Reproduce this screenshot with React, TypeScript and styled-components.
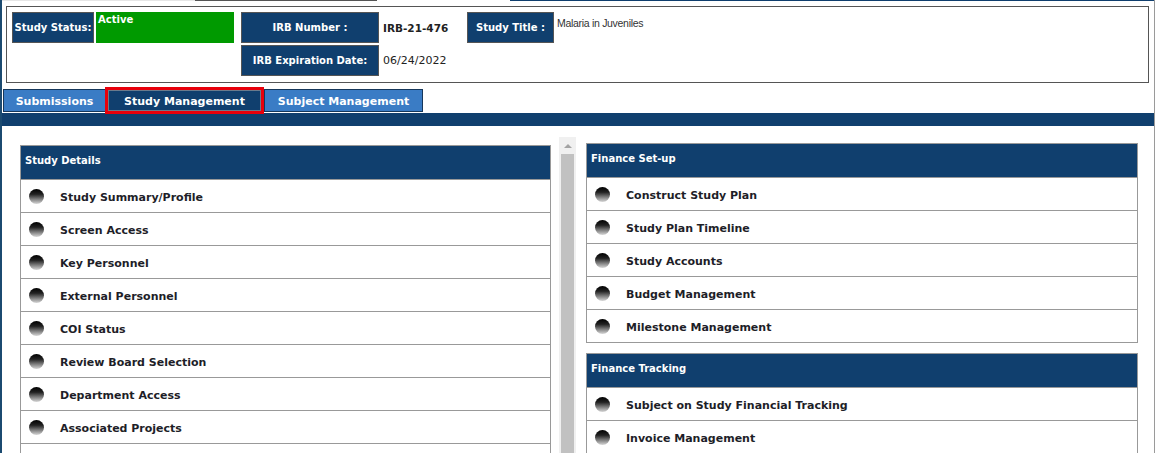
import React from 'react'
import styled, { createGlobalStyle } from 'styled-components'

const NAVY = '#103f6e'

const GlobalStyle = createGlobalStyle`
  html, body {
    margin: 0;
    padding: 0;
    overflow: hidden;
    background: #fff;
  }
  body {
    font-family: "DejaVu Sans", Verdana, sans-serif;
  }
`

const Page = styled.div`
  width: 1155px;
  height: 453px;
  box-sizing: border-box;
  border-left: 2px solid #1b4a70;
  border-right: 1px solid #9a9a9a;
  overflow: hidden;
`

const TopEdge = styled.div`
  display: flex;
  height: 1px;
`

const EdgePiece = styled.div<{ $w?: number; $c: string }>`
  flex: ${(p) => (p.$w ? `0 0 ${p.$w}px` : '1')};
  background: ${(p) => p.$c};
`

const InfoBox = styled.div`
  margin: 5px 5px 0 4px;
  border: 1px solid #555;
  padding: 5px 5px 6px;
  display: flex;
  align-items: flex-start;
`

const Label = styled.div<{ $w: number }>`
  box-sizing: border-box;
  width: ${(p) => p.$w}px;
  height: 31px;
  flex: none;
  background: ${NAVY};
  border: 1px solid #555;
  color: #fff;
  font-size: 10px;
  font-weight: bold;
  display: flex;
  align-items: center;
  justify-content: center;
  white-space: nowrap;
`

const StatusGroup = styled.div`
  display: flex;
  gap: 2px;
  margin-right: 7px;
`

const StatusValue = styled.div`
  width: 138px;
  height: 31px;
  background: #009a00;
  color: #fff;
  font-size: 10px;
  font-weight: bold;
  padding: 2px 2px 0;
  box-sizing: border-box;
`

const IrbGroup = styled.div`
  display: flex;
  flex-direction: column;
  gap: 2px;
`

const IrbRow = styled.div`
  display: flex;
  align-items: center;
`

const IrbValue = styled.div<{ $bold?: boolean }>`
  width: 84px;
  padding-left: 4px;
  font-size: ${(p) => (p.$bold ? 10.5 : 11)}px;
  font-weight: ${(p) => (p.$bold ? 'bold' : 'normal')};
  color: #222;
  white-space: nowrap;
`

const TitleValue = styled.div`
  padding: 5px 0 0 3px;
  font-family: "Liberation Sans", Arial, sans-serif;
  font-size: 10.5px;
  letter-spacing: -0.3px;
  color: #333;
`

const TabRow = styled.div`
  display: flex;
  margin: 6px 0 1px 1px;
  height: 23px;
`

const Tab = styled.div<{ $w: number; $active?: boolean }>`
  box-sizing: border-box;
  width: ${(p) => p.$w}px;
  margin-right: ${(p) => (p.$active ? 3 : 2)}px;
  height: ${(p) => (p.$active ? 21 : 23)}px;
  align-self: center;
  padding-top: 2px;
  background: ${(p) => (p.$active ? NAVY : '#3a7cc5')};
  border: 1px solid ${(p) => (p.$active ? '#6a7a8c' : '#16375a')};
  outline: ${(p) => (p.$active ? '3px solid #e8000b' : 'none')};
  color: #fff;
  font-size: 11px;
  font-weight: bold;
  display: flex;
  align-items: center;
  justify-content: center;
  white-space: nowrap;
`

const Bar = styled.div`
  height: 13px;
  background: ${NAVY};
`

const Content = styled.div`
  display: flex;
  align-items: flex-start;
  gap: 10px;
  padding: 11px 0 0 18px;
`

const LeftColumn = styled.div`
  display: flex;
  gap: 8px;
  align-items: flex-start;
`

const ListArea = styled.div`
  width: 531px;
  margin-top: 8px;
`

const Rail = styled.div`
  width: 17px;
  height: 420px;
  background: #f0f0f0;
  display: flex;
  flex-direction: column;
  align-items: center;
`

const RailArrow = styled.div`
  height: 17px;
  display: flex;
  align-items: center;
  justify-content: center;
  &::before {
    content: '';
    border-left: 4px solid transparent;
    border-right: 4px solid transparent;
    border-bottom: 4px solid #a3a3a3;
  }
`

const RailThumb = styled.div`
  flex: 1;
  width: 13px;
  background: #c1c1c1;
`

const RightColumn = styled.div`
  width: 552px;
  margin-top: 6px;
  display: flex;
  flex-direction: column;
  gap: 10px;
`

const Panel = styled.div`
  border: 1px solid #999;
`

const PanelHeader = styled.div`
  height: 33px;
  box-sizing: border-box;
  background: ${NAVY};
  color: #fff;
  font-size: 10px;
  font-weight: bold;
  padding: 0 0 5px 4px;
  display: flex;
  align-items: center;
`

const Row = styled.div`
  height: 33px;
  box-sizing: border-box;
  border-top: 1px solid #999;
  display: flex;
  align-items: center;
  padding: 1px 0 0 8px;
`

const Bullet = styled.span`
  width: 15px;
  height: 15px;
  border-radius: 50%;
  flex: none;
  margin: -1px 16px 0 0;
  background: linear-gradient(to bottom, #000 0%, #222 35%, #777 65%, #d8d8d8 100%);
`

const RowText = styled.span`
  font-size: 11px;
  font-weight: bold;
  color: #1e1e28;
  padding-top: 1px;
`

const studyDetails = [
  'Study Summary/Profile',
  'Screen Access',
  'Key Personnel',
  'External Personnel',
  'COI Status',
  'Review Board Selection',
  'Department Access',
  'Associated Projects',
  'Study Documents',
]

const financeSetup = [
  'Construct Study Plan',
  'Study Plan Timeline',
  'Study Accounts',
  'Budget Management',
  'Milestone Management',
]

const financeTracking = ['Subject on Study Financial Tracking', 'Invoice Management']

function LinkPanel({ title, items }: { title: string; items: string[] }) {
  return (
    <Panel>
      <PanelHeader>{title}</PanelHeader>
      {items.map((item) => (
        <Row key={item}>
          <Bullet />
          <RowText>{item}</RowText>
        </Row>
      ))}
    </Panel>
  )
}

export default function App() {
  return (
    <>
      <GlobalStyle />
      <Page>
        <TopEdge>
          <EdgePiece $w={193} $c="#e6e6e6" />
          <EdgePiece $w={182} $c="#555" />
          <EdgePiece $w={133} $c="#fff" />
          <EdgePiece $c={NAVY} />
        </TopEdge>

        <InfoBox>
          <StatusGroup>
            <Label $w={82}>Study Status:</Label>
            <StatusValue>Active</StatusValue>
          </StatusGroup>
          <IrbGroup>
            <IrbRow>
              <Label $w={138}>IRB Number :</Label>
              <IrbValue $bold>IRB-21-476</IrbValue>
            </IrbRow>
            <IrbRow>
              <Label $w={138}>IRB Expiration Date:</Label>
              <IrbValue>06/24/2022</IrbValue>
            </IrbRow>
          </IrbGroup>
          <Label $w={87}>Study Title :</Label>
          <TitleValue>Malaria in Juveniles</TitleValue>
        </InfoBox>

        <TabRow>
          <Tab $w={103}>Submissions</Tab>
          <Tab $w={153} $active>Study Management</Tab>
          <Tab $w={159}>Subject Management</Tab>
        </TabRow>
        <Bar />

        <Content>
          <LeftColumn>
            <ListArea>
              <LinkPanel title="Study Details" items={studyDetails} />
            </ListArea>
            <Rail>
              <RailArrow />
              <RailThumb />
            </Rail>
          </LeftColumn>
          <RightColumn>
            <LinkPanel title="Finance Set-up" items={financeSetup} />
            <LinkPanel title="Finance Tracking" items={financeTracking} />
          </RightColumn>
        </Content>
      </Page>
    </>
  )
}
